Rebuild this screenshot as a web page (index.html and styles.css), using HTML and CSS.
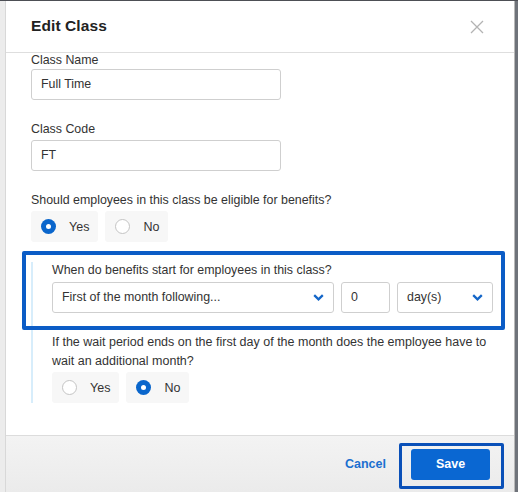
FILE: index.html
```html
<!DOCTYPE html>
<html lang="en">
<head>
<meta charset="utf-8">
<title>Edit Class</title>
<link rel="stylesheet" href="styles.css">
</head>
<body>
<div class="screen">
  <div class="gutter-left"></div>
  <div class="modal">
    <header class="modal-header">
      <h1 class="modal-title">Edit Class</h1>
      <button class="close" aria-label="Close">
        <svg width="14" height="14" viewBox="0 0 14 14"><path d="M1 1L13 13M13 1L1 13" stroke="#b3b3b3" stroke-width="1.3" fill="none"/></svg>
      </button>
    </header>
    <div class="modal-body">
      <div class="field first">
        <div class="label">Class Name</div>
        <div class="input wide">Full Time</div>
      </div>
      <div class="field">
        <div class="label">Class Code</div>
        <div class="input wide">FT</div>
      </div>
      <div class="field">
        <div class="label">Should employees in this class be eligible for benefits?</div>
        <div class="radios">
          <div class="radio-opt"><span class="dot on"></span><span>Yes</span></div>
          <div class="radio-opt"><span class="dot"></span><span>No</span></div>
        </div>
      </div>
      <div class="sub">
        <div class="annot"></div>
        <div class="label">When do benefits start for employees in this class?</div>
        <div class="row">
          <div class="input select s1"><span>First of the month following...</span>
            <svg class="chev" width="11" height="7" viewBox="0 0 11 7"><path d="M1.2 1.2L5.5 5.3L9.8 1.2" stroke="#1466c8" stroke-width="2.3" fill="none"/></svg>
          </div>
          <div class="input num">0</div>
          <div class="input select s2"><span>day(s)</span>
            <svg class="chev" width="11" height="7" viewBox="0 0 11 7"><path d="M1.2 1.2L5.5 5.3L9.8 1.2" stroke="#1466c8" stroke-width="2.3" fill="none"/></svg>
          </div>
        </div>
        <div class="label long">If the wait period ends on the first day of the month does the employee have to wait an additional month?</div>
        <div class="radios">
          <div class="radio-opt"><span class="dot"></span><span>Yes</span></div>
          <div class="radio-opt"><span class="dot on"></span><span>No</span></div>
        </div>
      </div>
    </div>
    <footer class="modal-footer">
      <a class="cancel">Cancel</a>
      <div class="save-wrap">
        <button class="save">Save</button>
        <div class="annot2"></div>
      </div>
    </footer>
  </div>
  <div class="gutter-right"></div>
</div>
</body>
</html>
```
FILE: styles.css
```css
* { box-sizing: border-box; }
html, body { margin: 0; padding: 0; }
body {
  width: 518px;
  height: 492px;
  overflow: hidden;
  font-family: "Liberation Sans", Arial, sans-serif;
  color: #333;
  background: #e9e9e9;
}
.screen {
  display: flex;
  height: 492px;
  border-top: 1px solid #4d4f55;
}
.gutter-left {
  width: 5px;
  background: #ececec;
}
.gutter-right {
  width: 4px;
  background: linear-gradient(90deg, #b9b9b9 0, #b9b9b9 1px, #6f737a 1px);
}
.modal {
  width: 509px;
  display: flex;
  flex-direction: column;
  background: #fff;
  border-left: 1px solid #d8d8d8;
}
.modal-header {
  height: 52px;
  border-bottom: 1px solid #dedede;
  display: flex;
  align-items: center;
  justify-content: space-between;
  padding: 0 30px 0 25px;
}
.modal-title {
  margin: 0;
  font-size: 15.5px;
  font-weight: bold;
  color: #222;
  letter-spacing: 0.1px;
  padding-bottom: 2px;
}
.close {
  border: 0;
  background: none;
  padding: 0;
  width: 14px;
  height: 14px;
  display: flex;
}
.modal-body {
  flex: 1;
  padding: 0 18px 0 25px;
  overflow: hidden;
}
.field { margin-top: 21px; }
.label {
  font-size: 12.4px;
  line-height: 16px;
  margin-bottom: 3px;
  color: #333;
}
.field.first { margin-top: 0; }
.field.first .label {
  line-height: 14px;
  margin-bottom: 2px;
}
.input {
  height: 31px;
  border: 1px solid #cfcfcf;
  border-radius: 3px;
  font-size: 12.4px;
  line-height: 29px;
  padding: 0 9px;
  color: #333;
  background: #fff;
}
.input.wide { width: 250px; }
.radios {
  display: flex;
  gap: 7px;
}
.radio-opt {
  height: 31px;
  display: flex;
  align-items: center;
  gap: 13px;
  padding: 0 9px 0 10px;
  background: #f7f7f7;
  border-radius: 3px;
  font-size: 12.5px;
  color: #333;
}
.dot {
  width: 15px;
  height: 15px;
  border-radius: 50%;
  border: 1px solid #c4c4c4;
  background: #fff;
  position: relative;
}
.dot.on {
  border: 0;
  background: #0a66cc;
}
.dot.on::after {
  content: "";
  position: absolute;
  left: 5px;
  top: 5px;
  width: 5px;
  height: 5px;
  border-radius: 50%;
  background: #fff;
}
.sub {
  position: relative;
  margin-top: 20px;
  border-left: 2px solid #d7edfb;
  padding-left: 19px;
}
.sub .label { margin-bottom: 4px; }
.row {
  display: flex;
  gap: 7px;
  margin-bottom: 20px;
}
.select {
  display: flex;
  align-items: center;
  justify-content: space-between;
  padding-right: 9px;
}
.s1 { width: 282px; flex: none; }
.num { width: 49px; flex: none; }
.s2 { width: 96px; flex: none; }
.label.long {
  font-size: 12.5px;
  line-height: 19px;
  margin-bottom: 1px;
}
.annot {
  position: absolute;
  left: -11px;
  top: -11px;
  width: 483px;
  height: 79px;
  border: 4px solid #0b5cc6;
  border-radius: 2px;
  pointer-events: none;
}
.modal-footer {
  height: 57px;
  border-top: 1px solid #dcdcdc;
  background: linear-gradient(#f3f3f3, #ebebeb);
  display: flex;
  align-items: center;
  justify-content: flex-end;
  padding-right: 24px;
  gap: 25px;
}
.cancel {
  font-size: 12.5px;
  font-weight: bold;
  color: #1b6fd0;
}
.save-wrap { position: relative; }
.save {
  width: 79px;
  height: 31px;
  border: 0;
  border-radius: 3px;
  background: #0a67d2;
  color: #fff;
  font-family: "Liberation Sans", Arial, sans-serif;
  font-size: 12.5px;
  font-weight: bold;
  display: block;
}
.annot2 {
  position: absolute;
  left: -12px;
  top: -6px;
  width: 105px;
  height: 46px;
  border: 3px solid #0a50b8;
  border-radius: 2px;
  pointer-events: none;
}
```
